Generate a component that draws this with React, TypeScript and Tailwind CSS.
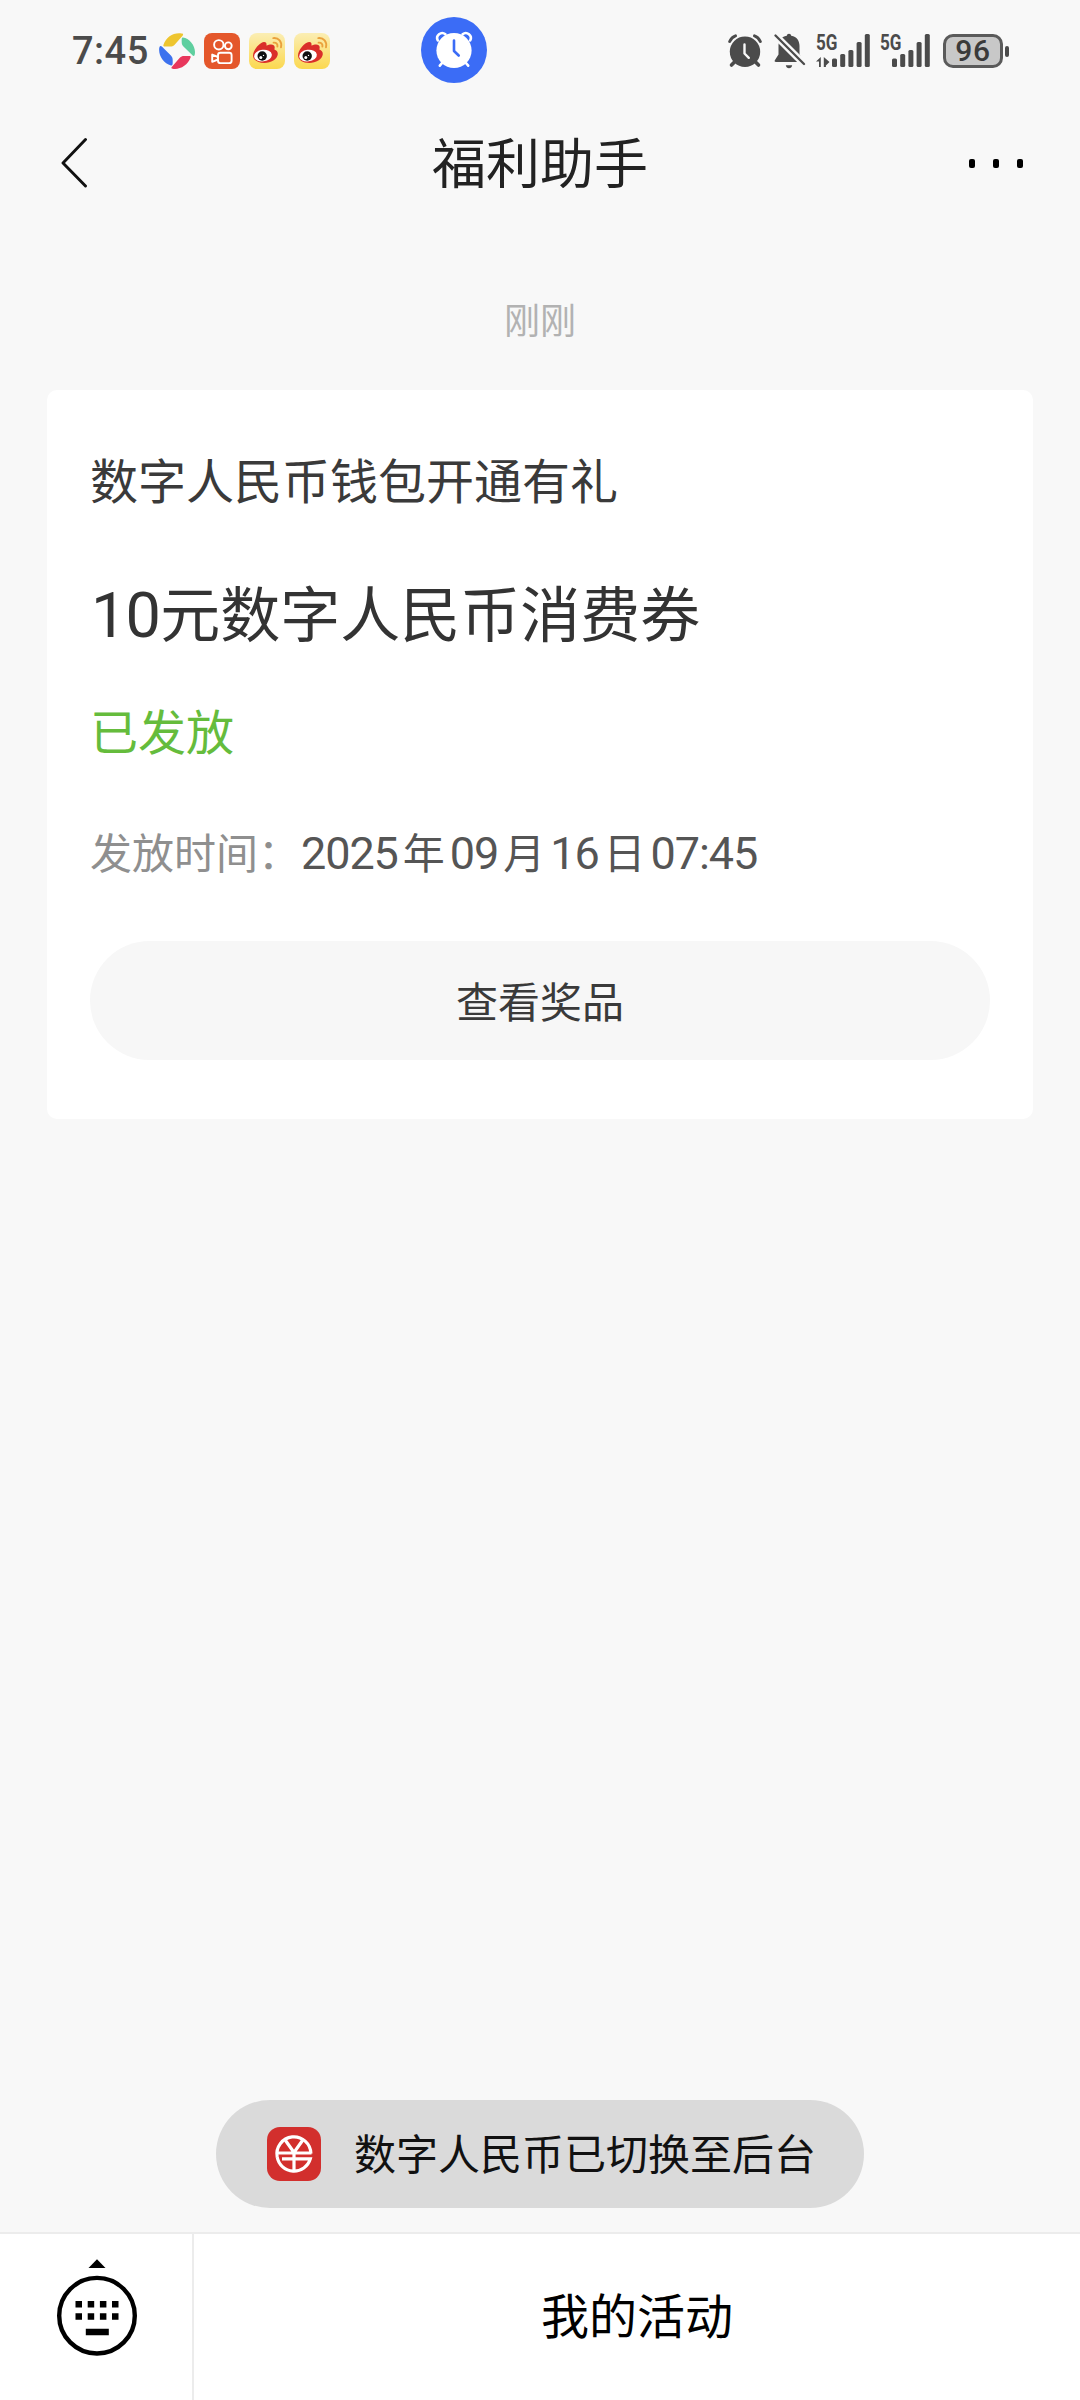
import type { ReactNode } from "react";

const PinwheelIcon = () => (
  <svg width="36" height="36" viewBox="0 0 36 36">
    <path d="M4.400 12C7 4.500 13 .4 20 .3c4 0 5 .8 3.600 2.400L15.400 12c-1.200 1.300-2.600 1.500-4.200 1.500H6.500C4.800 13.500 4 13 4.400 12Z" fill="#eec52f" />
    <path d="M24 4.400C30 5 36 12 36 19c0 4-1.200 4.800-2.800 3L24.200 13.200c-1.200-1.300-1.500-2.600-1.500-4.200C22.700 6 22.500 4.200 24 4.400Z" fill="#5fcf9f" />
    <path d="M31.600 24.500C29 31.500 22.500 35.900 16 35.900c-4 0-4.200-1-2.800-2.500l7.600-8.600c1.200-1.300 2.400-1.800 4.200-1.800H29.500C31.500 23 32 23.400 31.600 24.500Z" fill="#e8375c" />
    <path d="M12 32.400C5 30.500.2 24 .1 16.800c0-4 1.400-4.800 3-3l8.800 8.700c1.500 1.500 1.800 3 1.800 4.800V29.500C13.700 31.800 13.200 32.700 12 32.400Z" fill="#3d72ee" />
  </svg>
);

const CameraAppIcon = () => (
  <svg width="36" height="36" viewBox="0 0 36 36">
    <rect width="36" height="36" rx="8" fill="#e4572b" />
    <g fill="none" stroke="#fff" strokeWidth="1.900" strokeLinejoin="round">
      <circle cx="14.800" cy="11.800" r="4.700" />
      <circle cx="24.300" cy="12.800" r="3.400" />
      <rect x="14" y="19.800" width="13.600" height="10.300" rx="2.400" />
      <path d="M14 24 8.200 21.600v7.200L14 26.500" />
    </g>
  </svg>
);

const EyeAppIcon = () => (
  <svg width="36" height="36" viewBox="0 0 36 36">
    <defs>
      <linearGradient id="eye-bg" x1="0" y1="0" x2="0" y2="1">
        <stop offset="0" stopColor="#fbeeb4" />
        <stop offset="1" stopColor="#fbd84f" />
      </linearGradient>
    </defs>
    <rect width="36" height="36" rx="8" fill="url(#eye-bg)" />
    <path d="M4 22.500C4 17.500 10.500 9.300 15 9c2.500-.1 2.800 1.700 2.400 3.600 3.200-1.500 8.200-2.200 8.300 1.700 0 .900-.2 1.500-.3 2.100 2 .8 3.600 2.200 3.400 4.900C28.300 26.500 22 30 15.300 30 9 30 4 27 4 22.500Z" fill="#da2f2a" />
    <ellipse cx="14" cy="22.600" rx="8.900" ry="5.800" fill="#fff" transform="rotate(-7 14 22.600)" />
    <circle cx="13.200" cy="23" r="4.700" fill="#111" />
    <circle cx="11.800" cy="24.600" r="1.500" fill="#fff" />
    <circle cx="14.500" cy="22.400" r=".700" fill="#fff" />
    <g fill="none" stroke="#eaa13c" strokeWidth="1.900" strokeLinecap="round">
      <path d="M24.300 5.100c5.300-.6 9 3.800 7.700 9.300" />
      <path d="M24.600 9.600c2.800-.2 4.300 1.500 3.800 4" />
    </g>
  </svg>
);

const AlarmBadge = () => (
  <svg width="66" height="66" viewBox="0 0 66 66" className="mb-[2px] ml-[91px]">
    <circle cx="33" cy="33" r="33" fill="#3b6cf6" />
    <g fill="none" stroke="#fff" strokeWidth="2.600" strokeLinecap="round">
      <path d="M16.800 23.500a5 5 0 0 1 7.600-6.200M49.200 23.500a5 5 0 0 0-7.600-6.200M21.500 45.500l-2.700 3.200M44.500 45.500l2.700 3.200" />
    </g>
    <circle cx="33" cy="33.500" r="17.600" fill="#fff" />
    <path d="M33 23.500v10.500l4.700 4.500" fill="none" stroke="#3b6cf6" strokeWidth="2.600" strokeLinecap="round" strokeLinejoin="round" />
  </svg>
);

const AlarmIcon = () => (
  <svg width="34" height="34" viewBox="0 0 34 34" className="ml-[241px]">
    <g fill="none" stroke="#4b4b4b" strokeLinecap="round">
      <path d="M1.700 7.500C3 4.600 5 2.700 7.500 1.900M32.300 7.500C31 4.600 29 2.700 26.500 1.900" strokeWidth="3" />
      <path d="M6.500 28l-3 3M27.500 28l3 3" strokeWidth="3.600" />
    </g>
    <circle cx="17" cy="17.800" r="15.200" fill="#4b4b4b" />
    <path d="M16.500 10.500v9l4.300 4.300" fill="none" stroke="#f8f8f8" strokeWidth="2.400" strokeLinecap="round" strokeLinejoin="round" />
  </svg>
);

const MutedBellIcon = () => (
  <svg width="32" height="36" viewBox="0 0 32 36" className="ml-[12px]">
    <path d="M15 .8c1.300 0 2 .8 2.200 1.900C23 3.600 25.500 8 25.500 13v8.500l3.500 5.600c.7 1.200.2 2-1 2H2c-1.300 0-1.800-.8-1-2l3.500-5.600V13C4.500 8 7 3.600 12.800 2.700 13 1.600 13.700.8 15 .8Z" fill="#4b4b4b" />
    <path d="M11.800 32.200h6.400c-.3 1.800-1.600 3-3.200 3s-2.900-1.200-3.200-3Z" fill="#4b4b4b" />
    <path d="M-1 0 33 34" stroke="#f8f8f8" strokeWidth="7" />
    <path d="M1.500 2.500 30 31" stroke="#4b4b4b" strokeWidth="2.300" strokeLinecap="round" />
  </svg>
);

const SignalIcon = ({ children, offset }: { children?: ReactNode; offset: number }) => (
  <svg width={offset + 38} height="48" viewBox={`0 -6 ${offset + 38} 48`}>
    <text x="0" y="16.500" fontSize="22" fontWeight="700" textLength="21.500" lengthAdjust="spacingAndGlyphs" fill="#4b4b4b" className="font-[Roboto,sans-serif]">
      5G
    </text>
    {children}
    <g fill="#4b4b4b" transform={`translate(${offset} 0)`}>
      <rect x="0" y="25.500" width="5" height="8.500" rx="1.500" />
      <rect x="8.200" y="21" width="5" height="13" rx="1.500" />
      <rect x="16.400" y="17" width="5" height="17" rx="1.500" />
      <rect x="24.600" y="9" width="5" height="25" rx="1.500" />
      <rect x="32.800" y="1" width="5" height="33" rx="1.500" />
    </g>
  </svg>
);

const StatusBar = () => (
  <div className="flex h-[102px] items-center">
    <div className="ml-[72px] w-[87px] font-[Roboto,sans-serif] text-[38px] leading-none font-medium tracking-[0.500px] text-[#4b4b4b]">
      7:45
    </div>
    <div className="flex gap-[9px]">
      <PinwheelIcon />
      <CameraAppIcon />
      <EyeAppIcon />
      <EyeAppIcon />
    </div>
    <AlarmBadge />
    <AlarmIcon />
    <MutedBellIcon />
    <div className="ml-[10px] flex gap-[10px]">
      <SignalIcon offset={16}>
        <path d="M0 28.500l4.800-4.500v10H3v-5.500ZM7.800 24l5.700 5-3.600 3.500v1.500H7.800Z" fill="#4b4b4b" />
      </SignalIcon>
      <SignalIcon offset={12} />
    </div>
    <div className="ml-[13px] flex items-center gap-[2px]">
      <div className="flex h-[34px] w-[60px] items-center justify-center rounded-[10px] border-[3.500px] border-[#5a5a5a] bg-[#c8c8c8] font-[Roboto,sans-serif] text-[30px] leading-none font-medium tracking-[0.600px] text-[#3a3a3a]">
        96
      </div>
      <div className="h-[11px] w-[4px] rounded-[2px] bg-[#4b4b4b]" />
    </div>
  </div>
);

const Header = () => (
  <header className="grid h-[120px] grid-cols-3 items-center">
    <svg width="30" height="52" viewBox="0 0 30 52" className="ml-[60px]">
      <path d="M25.500 3.500 3 27 25.500 50" fill="none" stroke="#111" strokeWidth="2.900" strokeLinecap="round" strokeLinejoin="round" />
    </svg>
    <h1 className="pb-[2px] text-center text-[54px] leading-none text-[#222]">福利助手</h1>
    <div className="mt-[2px] mr-[57px] flex justify-end gap-[18px]">
      <span className="h-[9px] w-[6px] rounded-[2px] bg-black" />
      <span className="h-[9px] w-[6px] rounded-[2px] bg-black" />
      <span className="h-[9px] w-[6px] rounded-[2px] bg-black" />
    </div>
  </header>
);

const RewardCard = () => (
  <section className="mx-[47px] mt-[51px] flex h-[729px] flex-col rounded-[10px] bg-white px-[43px]">
    <h2 className="mt-[63px] text-[48px] leading-[50px] text-[#3a3a3a]">
      数字人民币钱包开通有礼
    </h2>
    <p className="mt-[76px] h-[64px] text-[60px] leading-[64px] text-[#333]">
      <span className="ml-[1px] font-[Roboto,sans-serif] text-[63px] tracking-[-0.800px]">10</span>
      元数字人民币消费券
    </p>
    <p className="mt-[61px] text-[48px] leading-[50px] text-[#65bc3c]">已发放</p>
    <div className="mt-[75px] flex h-[44px] text-[42px] leading-[44px] whitespace-nowrap">
      <span className="text-[#8f8f8f]">发放时间</span>
      <span className="w-[43px] text-[#8f8f8f]">：</span>
      <div className="flex items-baseline gap-[5px] text-[#555]">
        <span className="font-[Roboto,sans-serif] text-[45px] tracking-[-1.100px]">2025</span>
        <span>年</span>
        <span className="font-[Roboto,sans-serif] text-[45px] tracking-[-1.100px]">09</span>
        <span>月</span>
        <span className="font-[Roboto,sans-serif] text-[45px] tracking-[-1.100px]">16</span>
        <span>日</span>
        <span className="font-[Roboto,sans-serif] text-[45px] tracking-[-1.100px]">07:45</span>
      </div>
    </div>
    <button className="mt-[68px] h-[119px] rounded-full bg-[#f7f7f7] pb-[2px] text-[42px] leading-none text-[#3a3a3a]">
      查看奖品
    </button>
  </section>
);

const Toast = () => (
  <div className="mx-auto flex h-[108px] w-[648px] items-center rounded-full bg-[#dadada] pl-[51px]">
    <svg width="54" height="54" viewBox="0 0 54 54">
      <rect width="54" height="54" rx="13" fill="#d22f2d" />
      <g fill="none" stroke="#fff" strokeWidth="3.200">
        <path d="M10.200 30A17 17 0 1 1 43.900 26.500" />
        <path d="M10.200 30A17 17 0 0 0 43.300 31.800H31" />
        <path d="M9.500 26h35M15 31.800h16M27 26v18M18.500 13.500 27 25.500l8.500-12" />
      </g>
    </svg>
    <span className="ml-[33px] pb-[4px] text-[42px] leading-none text-[#111]">
      数字人民币已切换至后台
    </span>
  </div>
);

const BottomBar = () => (
  <footer className="mt-[24px] flex h-[168px] border-t-2 border-[#ececec] bg-white">
    <div className="w-[194px] border-r-2 border-[#ececec]">
      <svg width="84" height="104" viewBox="0 0 84 104" className="mt-[22px] ml-[55px]">
        <path d="M42 3.300 50.500 12h-17Z" />
        <circle cx="42" cy="59.700" r="37.800" fill="none" stroke="#000" strokeWidth="4.400" />
        <path d="M20.500 45h6.500v6.500h-6.500ZM32.700 45h6.500v6.500h-6.500ZM44.900 45h6.500v6.500h-6.500ZM57 45h6.500v6.500H57ZM20.500 57.200h6.500v6.500h-6.500ZM32.700 57.200h6.500v6.500h-6.500ZM44.900 57.200h6.500v6.500h-6.500ZM57 57.200h6.500v6.500H57ZM30.800 72.800h23v6.500h-23Z" />
      </svg>
    </div>
    <div className="flex flex-1 items-center justify-center pb-[8px] text-[48px] leading-none text-black">
      我的活动
    </div>
  </footer>
);

const App = () => {
  return (
    <div className="flex h-[2400px] w-[1080px] flex-col bg-[#f8f8f8] font-['Noto_Sans_CJK_SC',sans-serif]">
      <StatusBar />
      <Header />
      <p className="mt-[75px] text-center text-[36px] leading-[42px] text-[#b2b2b2]">
        刚刚
      </p>
      <RewardCard />
      <div className="mt-auto">
        <Toast />
        <BottomBar />
      </div>
    </div>
  );
};

export default App;
